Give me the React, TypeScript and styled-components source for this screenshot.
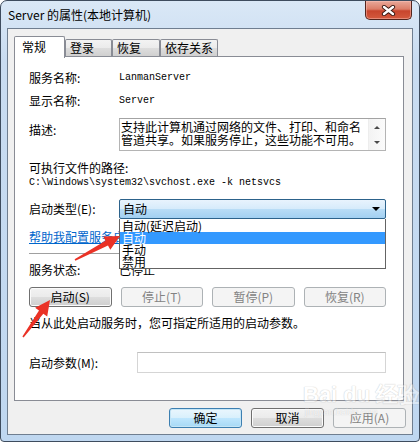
import React from "react";
import styled, { createGlobalStyle } from "styled-components";

const CJK = `"Noto Sans CJK SC", "Noto Sans", sans-serif`;
const MONO = `"Liberation Mono", "DejaVu Sans Mono", monospace`;

const Global = createGlobalStyle`
  html, body { margin: 0; padding: 0; background: #ffffff; }
  body { font-family: ${CJK}; font-size: 12px; color: #000; }
  * { box-sizing: border-box; }
`;

const Window = styled.div`
  position: relative;
  width: 420px;
  height: 442px;
  border: 1px solid #3e4c5e;
  border-radius: 7px 7px 4px 4px;
  background: linear-gradient(to bottom, #dae8f6 0px, #c9dcf1 60px, #bfd7f0 100%);
  padding: 0 6px 6px;
  display: flex;
  flex-direction: column;
  overflow: hidden;
`;

const TitleBar = styled.div`
  height: 27px;
  display: flex;
  justify-content: space-between;
  align-items: flex-start;
`;

const Title = styled.div`
  padding-left: 1px;
  line-height: 27px;
  font-size: 12px;
  color: #000;
  white-space: nowrap;
`;

const CloseButton = styled.div`
  width: 47px;
  height: 19px;
  margin-right: 1px;
  border: 1px solid #54251d;
  border-top: none;
  border-radius: 0 0 5px 5px;
  background: linear-gradient(to bottom, #e9a99a 0%, #dc7d68 45%, #c8452d 55%, #d45a3e 100%);
  box-shadow: inset 0 0 0 1px rgba(255, 200, 190, 0.45);
  display: flex;
  align-items: center;
  justify-content: center;
`;

const Client = styled.div`
  flex: 1;
  border: 1px solid #6f7e90;
  background: #f0f0f0;
  display: flex;
  flex-direction: column;
`;

const TabArea = styled.div`
  padding: 7px 8px 0 6px;
  display: flex;
  flex-direction: column;
`;

const TabStrip = styled.div`
  height: 20px;
  display: flex;
  align-items: flex-start;
`;

const Tab = styled.div<{ $active?: boolean; $w: number }>`
  position: relative;
  z-index: ${(p) => (p.$active ? 2 : 1)};
  width: ${(p) => p.$w}px;
  height: ${(p) => (p.$active ? 22 : 17)}px;
  margin-top: ${(p) => (p.$active ? 0 : 3)}px;
  border: 1px solid #898c95;
  border-bottom: none;
  border-radius: 2px 2px 0 0;
  padding-left: ${(p) => (p.$active ? 7 : 4)}px;
  line-height: ${(p) => (p.$active ? 20 : 16)}px;
  font-size: 12px;
  color: #000;
  white-space: nowrap;
  background: ${(p) =>
    p.$active
      ? "#ffffff"
      : "linear-gradient(to bottom, #f3f3f3 0%, #ebebeb 50%, #dddddd 51%, #d0d0d0 100%)"};
`;

const Panel = styled.div`
  height: 345px;
  border: 1px solid #898c95;
  background: #ffffff;
  padding: 11px 17px 0 14px;
  display: flex;
  flex-direction: column;
`;

const Row = styled.div<{ $h?: number; $mt?: number; $top?: boolean }>`
  display: flex;
  align-items: ${(p) => (p.$top ? "flex-start" : "center")};
  height: ${(p) => (p.$h ? `${p.$h}px` : "auto")};
  margin-top: ${(p) => p.$mt ?? 0}px;
  flex-shrink: 0;
`;

const Label = styled.div<{ $w?: number; $mt?: number }>`
  width: ${(p) => p.$w ?? 90}px;
  flex-shrink: 0;
  margin-top: ${(p) => p.$mt ?? 0}px;
  font-size: 12px;
  line-height: 16px;
  white-space: nowrap;
`;

const Text = styled.div`
  font-size: 12px;
  line-height: 16px;
  white-space: nowrap;
`;

const MonoValue = styled.div`
  font-family: ${MONO};
  font-size: 10px;
  line-height: 14px;
  white-space: nowrap;
  color: #000;
`;

const DescBox = styled.div`
  flex: 1;
  height: 33px;
  border: 1px solid #b4b4b4;
  border-top-color: #a3a3a3;
  background: #ffffff;
  display: flex;
`;

const DescText = styled.div`
  flex: 1;
  padding: 1px 0 0 1px;
  font-size: 12px;
  line-height: 13px;
  white-space: nowrap;
`;

const ScrollBar = styled.div`
  width: 17px;
  border-left: 1px solid #ededed;
  background: linear-gradient(to right, #f3f3f3, #fbfbfb);
  display: flex;
  flex-direction: column;
  justify-content: space-between;
  align-items: center;
  padding: 7px 0 6px;
`;

const Tri = styled.div<{ $dir: "up" | "down"; $c?: string; $size?: number }>`
  width: 0;
  height: 0;
  border-left: ${(p) => p.$size ?? 3}px solid transparent;
  border-right: ${(p) => p.$size ?? 3}px solid transparent;
  ${(p) =>
    p.$dir === "up"
      ? `border-bottom: ${p.$size ?? 3}px solid ${p.$c ?? "#4a4a4a"};`
      : `border-top: ${p.$size ?? 3}px solid ${p.$c ?? "#4a4a4a"};`}
`;

const SelectWrap = styled.div`
  position: relative;
  flex: 1;
  height: 20px;
`;

const SelectBox = styled.div`
  height: 20px;
  border: 1px solid #2c628b;
  border-radius: 2px;
  background: linear-gradient(to bottom, #e8f3fd 0%, #d6ebfb 48%, #b8dcf6 52%, #a2d0f2 100%);
  display: flex;
  align-items: center;
  justify-content: space-between;
  padding: 0 5px 0 3px;
  font-size: 12px;
  line-height: 16px;
`;

const DropList = styled.div`
  position: absolute;
  z-index: 5;
  top: 100%;
  left: 0;
  right: 0;
  border: 1px solid #646464;
  border-top: none;
  background: #ffffff;
  padding-top: 1px;
`;

const DropItem = styled.div<{ $sel?: boolean }>`
  height: 12px;
  line-height: 12px;
  padding-left: 2px;
  font-size: 12px;
  white-space: nowrap;
  color: ${(p) => (p.$sel ? "#ffffff" : "#000000")};
  background: ${(p) => (p.$sel ? "#3399ff" : "transparent")};
`;

const Link = styled.a`
  font-size: 12px;
  line-height: 16px;
  color: #0066cc;
  text-decoration: underline;
  white-space: nowrap;
`;

const Separator = styled.div<{ $mt: number }>`
  margin-top: ${(p) => p.$mt}px;
  height: 1px;
  flex-shrink: 0;
  background: #a0a0a0;
`;

const ButtonGrid = styled.div`
  display: grid;
  grid-template-columns: repeat(4, 1fr);
  column-gap: 9px;
  height: 20px;
  margin-top: 8px;
  flex-shrink: 0;
`;

const Button = styled.div<{ $variant?: "normal" | "disabled" | "default"; $w?: number }>`
  width: ${(p) => (p.$w ? `${p.$w}px` : "auto")};
  height: 20px;
  border-radius: 3px;
  display: flex;
  align-items: center;
  justify-content: center;
  font-size: 12px;
  line-height: 16px;
  white-space: nowrap;
  ${(p) =>
    p.$variant === "disabled"
      ? `border: 1px solid #adb2b5; background: #f4f4f4; color: #838383;`
      : p.$variant === "default"
      ? `border: 1px solid #3c7fb1; background: linear-gradient(to bottom, #eaf6fd 0%, #d9f0fc 48%, #bee6fd 52%, #a7d9f5 100%); color: #000; box-shadow: inset 0 0 0 1px #c4e5f6;`
      : `border: 1px solid #707070; background: linear-gradient(to bottom, #f2f2f2 0%, #ebebeb 48%, #dddddd 52%, #cfcfcf 100%); color: #000; box-shadow: inset 0 0 0 1px #fbfbfb;`}
`;

const ParamInput = styled.div`
  flex: 1;
  height: 21px;
  border: 1px solid #d5d5d5;
  border-top-color: #c0c0c0;
  background: #ffffff;
`;

const DialogButtons = styled.div`
  display: flex;
  justify-content: flex-end;
  gap: 9px;
  padding: 7px 6px 0 0;
`;

const Overlay = styled.svg`
  position: absolute;
  left: 0;
  top: 0;
  pointer-events: none;
  z-index: 10;
`;

const Watermark = styled.div`
  position: absolute;
  left: 302px;
  top: 382px;
  z-index: 9;
  pointer-events: none;
  display: flex;
  flex-direction: column;
  align-items: flex-start;
  opacity: 0.4;
`;

const WmMain = styled.div`
  font-family: "Liberation Sans", Arial, sans-serif;
  font-weight: bold;
  font-size: 22px;
  line-height: 24px;
  color: #ffffff;
  text-shadow: 0 0 1px #8a8a8a, 0 0 1px #8a8a8a;
  white-space: nowrap;
`;

const WmSub = styled.div`
  font-family: "Liberation Sans", Arial, sans-serif;
  font-size: 9px;
  line-height: 10px;
  color: #ffffff;
  text-shadow: 0 0 1px #8a8a8a;
  margin-left: 2px;
`;

function arrowPoints(x0: number, y0: number, x1: number, y1: number): string {
  const dx = x1 - x0;
  const dy = y1 - y0;
  const L = Math.hypot(dx, dy);
  const ux = dx / L;
  const uy = dy / L;
  const nx = -uy;
  const ny = ux;
  const hl = 15;
  const hw = 7.5;
  const sw0 = 0.8;
  const sw1 = 2.7;
  const bx = x1 - ux * hl;
  const by = y1 - uy * hl;
  const pts = [
    [x0 + nx * sw0, y0 + ny * sw0],
    [bx + nx * sw1, by + ny * sw1],
    [bx + nx * hw, by + ny * hw],
    [x1, y1],
    [bx - nx * hw, by - ny * hw],
    [bx - nx * sw1, by - ny * sw1],
    [x0 - nx * sw0, y0 - ny * sw0],
  ];
  return pts.map(([a, b]) => `${a.toFixed(1)},${b.toFixed(1)}`).join(" ");
}

export default function App() {
  return (
    <>
      <Global />
      <Window>
        <TitleBar>
          <Title>Server 的属性(本地计算机)</Title>
          <CloseButton>
            <svg width="15" height="11" viewBox="0 0 15 11">
              <path d="M3 2 L12 9 M12 2 L3 9" stroke="#3a1a14" strokeWidth="4.2" strokeLinecap="round" />
              <path d="M3 2 L12 9 M12 2 L3 9" stroke="#ffffff" strokeWidth="2.4" strokeLinecap="round" />
            </svg>
          </CloseButton>
        </TitleBar>
        <Client>
          <TabArea>
            <TabStrip>
              <Tab $active $w={51}>常规</Tab>
              <Tab $w={47}>登录</Tab>
              <Tab $w={48}>恢复</Tab>
              <Tab $w={58}>依存关系</Tab>
            </TabStrip>
            <Panel>
              <Row $h={20}>
                <Label>服务名称:</Label>
                <MonoValue>LanmanServer</MonoValue>
              </Row>
              <Row $h={20} $mt={3}>
                <Label>显示名称:</Label>
                <MonoValue>Server</MonoValue>
              </Row>
              <Row $mt={7} $top>
                <Label $mt={4}>描述:</Label>
                <DescBox>
                  <DescText>
                    支持此计算机通过网络的文件、打印、和命名
                    <br />
                    管道共享。如果服务停止，这些功能不可用。
                  </DescText>
                  <ScrollBar>
                    <Tri $dir="up" />
                    <Tri $dir="down" />
                  </ScrollBar>
                </DescBox>
              </Row>
              <Row $h={16} $mt={9}>
                <Text>可执行文件的路径:</Text>
              </Row>
              <Row $h={14}>
                <MonoValue>{"C:\\Windows\\system32\\svchost.exe -k netsvcs"}</MonoValue>
              </Row>
              <Row $h={20} $mt={9}>
                <Label>启动类型(E):</Label>
                <SelectWrap>
                  <SelectBox>
                    <span>自动</span>
                    <Tri $dir="down" $c="#000" $size={4} />
                  </SelectBox>
                  <DropList>
                    <DropItem>自动(延迟启动)</DropItem>
                    <DropItem $sel>自动</DropItem>
                    <DropItem>手动</DropItem>
                    <DropItem>禁用</DropItem>
                  </DropList>
                </SelectWrap>
              </Row>
              <Row $h={16} $mt={10}>
                <Link>帮助我配置服务启动选项。</Link>
              </Row>
              <Separator $mt={8} />
              <Row $h={18} $mt={7}>
                <Label>服务状态:</Label>
                <Text>已停止</Text>
              </Row>
              <ButtonGrid>
                <Button $variant="normal">启动(S)</Button>
                <Button $variant="disabled">停止(T)</Button>
                <Button $variant="disabled">暂停(P)</Button>
                <Button $variant="disabled">恢复(R)</Button>
              </ButtonGrid>
              <Row $h={16} $mt={8}>
                <Text>当从此处启动服务时，您可指定所适用的启动参数。</Text>
              </Row>
              <Row $h={21} $mt={21}>
                <Label $w={108}>启动参数(M):</Label>
                <ParamInput />
              </Row>
            </Panel>
          </TabArea>
          <DialogButtons>
            <Button $variant="default" $w={73}>确定</Button>
            <Button $variant="normal" $w={73}>取消</Button>
            <Button $variant="disabled" $w={73}>应用(A)</Button>
          </DialogButtons>
        </Client>
        <Watermark>
          <WmMain>Bai du 经验</WmMain>
          <WmSub>jingyan.baidu.com</WmSub>
        </Watermark>
      </Window>
      <Overlay width="420" height="442" viewBox="0 0 420 442">
        <polygon points={arrowPoints(75, 260, 120, 236)} fill="#ea3226" />
        <polygon points={arrowPoints(23, 337, 50, 300)} fill="#ea3226" />
      </Overlay>
    </>
  );
}
